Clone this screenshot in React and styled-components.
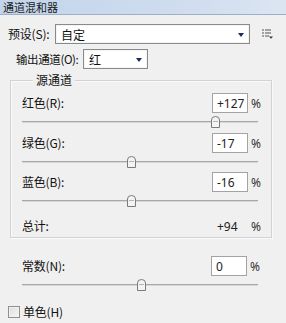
import React from "react";
import styled, { createGlobalStyle } from "styled-components";

const Global = createGlobalStyle`
  html, body { margin: 0; padding: 0; background: #f0f0f0; }
  body { width: 286px; height: 323px; overflow: hidden; font-family: "Noto Sans CJK SC", "Noto Sans", sans-serif; font-size: 12px; color: #111; }
`;

const Panel = styled.div`
  width: 286px;
  height: 323px;
  background: #f0f0f0;
  display: flex;
  flex-direction: column;
`;

const TitleBar = styled.div`
  height: 14px;
  overflow: hidden;
  background: linear-gradient(90deg, #c2d4eb 0%, #cfdcee 60%, #dbe5f2 100%);
  border-bottom: 1px solid #9fb0c6;
`;

const TitleText = styled.div`
  margin: 0 0 0 3px;
  font-size: 11px;
  line-height: 14px;
  color: #1a1a1a;
  font-family: "Noto Sans CJK SC", sans-serif;
`;

const Row = styled.div`
  display: flex;
  align-items: center;
  height: 20px;
  margin-top: ${(p) => p.$mt || 0}px;
  padding-left: ${(p) => p.$pl || 0}px;
`;

const Label = styled.span`
  font-family: "Noto Sans CJK SC", "Noto Sans", sans-serif;
  font-size: ${(p) => (p.$small ? 11.5 : 12)}px;
  line-height: 16px;
  letter-spacing: ${(p) => (p.$small ? -0.4 : -0.2)}px;
  width: ${(p) => (p.$w ? p.$w + "px" : "auto")};
  flex: ${(p) => (p.$w ? "none" : "1")};
  white-space: nowrap;
`;

const Select = styled.div`
  box-sizing: border-box;
  width: ${(p) => p.$w}px;
  height: 20px;
  background: #fff;
  border: 1px solid #8a8a8a;
  box-shadow: inset 0 0 0 1px #f4f4f4;
  display: flex;
  align-items: center;
  padding: 0 5px;
  font-family: "Noto Sans CJK SC", sans-serif;
  font-size: 12px;
  justify-content: space-between;
`;

const Arrow = styled.span`
  width: 0;
  height: 0;
  border-left: 3.5px solid transparent;
  border-right: 3.5px solid transparent;
  border-top: 4px solid #1d2a5e;
  margin-top: 1px;
`;

const MenuIcon = styled.svg`
  margin-left: 12px;
  flex: none;
`;

const Group = styled.div`
  box-sizing: border-box;
  margin: 11px 0 0 10px;
  width: 262px;
  border: 1px solid #d2d2d2;
  box-shadow: inset 1px 1px 0 #fafafa, 1px 1px 0 #fafafa;
  padding: 0 0 3px 11px;
  display: flex;
  flex-direction: column;
`;

const Legend = styled.div`
  margin: -9px 0 0 11px;
  padding: 0 3px;
  width: fit-content;
  line-height: 16px;
  height: 16px;
  background: #f0f0f0;
  font-family: "Noto Sans CJK SC", sans-serif;
  font-size: 12px;
`;

const Block = styled.div`
  box-sizing: border-box;
  display: flex;
  flex-direction: column;
  margin-top: ${(p) => p.$mt}px;
  padding-left: ${(p) => p.$pl || 0}px;
  width: ${(p) => (p.$w ? p.$w + "px" : "auto")};
`;

const ValueBox = styled.div`
  box-sizing: border-box;
  width: 36px;
  height: 20px;
  background: #fff;
  border: 1px solid #a3a3a3;
  padding-left: 4px;
  display: flex;
  align-items: center;
  font-family: "Noto Sans", sans-serif;
  font-size: 12px;
  color: #222;
`;

const Pct = styled.span`
  width: 23px;
  box-sizing: border-box;
  padding-left: 3px;
  font-family: "Noto Sans", sans-serif;
  font-size: 12px;
  color: #333;
`;

const SliderWrap = styled.div`
  position: relative;
  width: 236px;
  height: 10px;
  margin-top: 4px;
  flex: none;
`;

const Track = styled.div`
  position: absolute;
  left: 0;
  right: 0;
  top: 4px;
  height: 1px;
  background: #a8a8a8;
  border-bottom: 1px solid #d8d8d8;
`;

const Thumb = styled.svg`
  position: absolute;
  top: -1px;
  margin-left: -4px;
`;

const TotalRow = styled.div`
  display: flex;
  align-items: center;
  height: 16px;
  margin-top: 12px;
`;

const TotalValue = styled.span`
  width: 31px;
  font-family: "Noto Sans", sans-serif;
  font-size: 12px;
  color: #222;
`;

const CheckRow = styled.div`
  display: flex;
  align-items: center;
  margin: 14px 0 0 8px;
  gap: 3px;
`;

const Box = styled.span`
  box-sizing: border-box;
  width: 12px;
  height: 12px;
  border: 1px solid #8e8f8f;
  background: linear-gradient(135deg, #dcdcdc, #f6f6f6);
  box-shadow: inset 0 0 0 1px #f2f2f2;
`;

function Slider({ value }) {
  const pos = ((value + 200) / 400) * 235 + 1;
  return (
    <SliderWrap>
      <Track />
      <Thumb width="9" height="12" viewBox="0 0 9 12" style={{ left: pos }}>
        <path d="M0.5 11.5 V4 Q0.5 0.5 4.5 0.5 Q8.5 0.5 8.5 4 V11.5 Z" fill="#f3f3f3" stroke="#7b7b7b" />
        <path d="M2 5.5 H7" stroke="#b5b5b5" />
      </Thumb>
    </SliderWrap>
  );
}

function Channel({ label, value, mt }) {
  return (
    <Block $mt={mt}>
      <Row>
        <Label>{label}</Label>
        <ValueBox>{value > 0 ? "+" + value : value}</ValueBox>
        <Pct>%</Pct>
      </Row>
      <Slider value={value} />
    </Block>
  );
}

export default function App() {
  return (
    <>
      <Global />
      <Panel>
        <TitleBar>
          <TitleText>通道混和器</TitleText>
        </TitleBar>
        <Row $mt={9} $pl={8}>
          <Label $w={47}>预设(S):</Label>
          <Select $w={195}>
            <span>自定</span>
            <Arrow />
          </Select>
          <MenuIcon width="11" height="10" viewBox="0 0 11 10">
            <rect x="0" y="0.5" width="2" height="1" fill="#555" />
            <rect x="3" y="0.5" width="6" height="1" fill="#555" />
            <rect x="0" y="3.5" width="2" height="1" fill="#555" />
            <rect x="3" y="3.5" width="6" height="1" fill="#555" />
            <rect x="0" y="6.5" width="2" height="1" fill="#555" />
            <rect x="3" y="6.5" width="4" height="1" fill="#555" />
            <path d="M7 7.5 H11 L9 9.8 Z" fill="#333" />
          </MenuIcon>
        </Row>
        <Row $mt={5} $pl={16}>
          <Label $w={67} $small>输出通道(O):</Label>
          <Select $w={65}>
            <span>红</span>
            <Arrow />
          </Select>
        </Row>
        <Group>
          <Legend>源通道</Legend>
          <Channel label="红色(R):" value={127} mt={5} />
          <Channel label="绿色(G):" value={-17} mt={6} />
          <Channel label="蓝色(B):" value={-16} mt={5} />
          <TotalRow>
            <Label>总计:</Label>
            <TotalValue>+94</TotalValue>
            <Pct>%</Pct>
          </TotalRow>
        </Group>
        <Block $mt={18} $pl={22} $w={270}>
          <Row>
            <Label>常数(N):</Label>
            <ValueBox>0</ValueBox>
            <Pct>%</Pct>
          </Row>
          <Slider value={0} />
        </Block>
        <CheckRow>
          <Box />
          <Label>单色(H)</Label>
        </CheckRow>
      </Panel>
    </>
  );
}
